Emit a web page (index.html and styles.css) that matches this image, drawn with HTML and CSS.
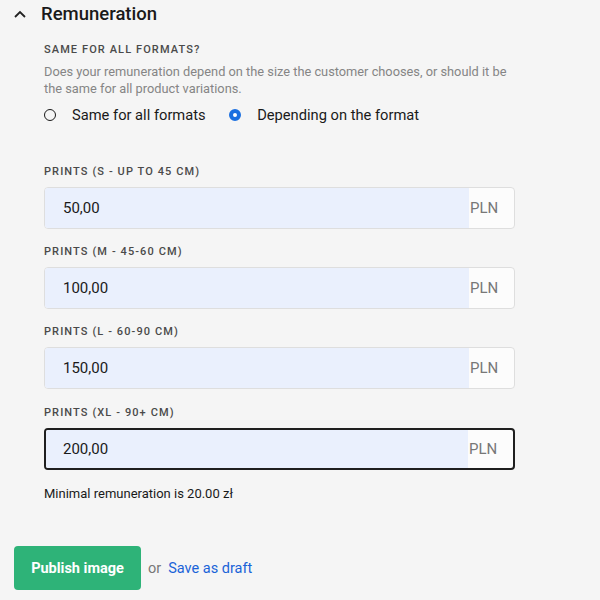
FILE: index.html
```html
<!DOCTYPE html>
<html>
<head>
<meta charset="utf-8">
<link rel="stylesheet" href="styles.css">
</head>
<body>
<div class="page">
  <div class="header">
    <svg class="chev" width="12" height="8" viewBox="0 0 12 8"><path d="M1 7 L6 2 L11 7" fill="none" stroke="#222" stroke-width="1.8"/></svg>
    <h2 class="title">Remuneration</h2>
  </div>
  <div class="content">
    <div class="caps">SAME FOR ALL FORMATS?</div>
    <p class="desc">Does your remuneration depend on the size the customer chooses, or should it be the same for all product variations.</p>
    <div class="radios">
      <label class="radio"><span class="dot"></span>Same for all formats</label>
      <label class="radio"><span class="dot on"></span>Depending on the format</label>
    </div>
    <div class="fields">
      <div class="field">
        <div class="caps">PRINTS (S - UP TO 45 CM)</div>
        <div class="input"><span class="val">50,00</span><span class="unit">PLN</span></div>
      </div>
      <div class="field">
        <div class="caps">PRINTS (M - 45-60 CM)</div>
        <div class="input"><span class="val">100,00</span><span class="unit">PLN</span></div>
      </div>
      <div class="field">
        <div class="caps">PRINTS (L - 60-90 CM)</div>
        <div class="input"><span class="val">150,00</span><span class="unit">PLN</span></div>
      </div>
      <div class="field">
        <div class="caps">PRINTS (XL - 90+ CM)</div>
        <div class="input focus"><span class="val">200,00</span><span class="unit">PLN</span></div>
      </div>
    </div>
    <div class="minimal">Minimal remuneration is 20.00 zł</div>
  </div>
  <div class="actions">
    <button class="publish">Publish image</button>
    <span class="or">or</span>
    <a class="draft">Save as draft</a>
  </div>
</div>
</body>
</html>
```
FILE: styles.css
```css
html, body { margin: 0; padding: 0; background: #f5f5f5; }
body { font-family: Roboto, "Noto Sans", sans-serif; color: #1f1f1f; width: 600px; height: 600px; overflow: hidden; }
.page { padding: 3px 0 0 14px; }
.header { display: flex; align-items: center; height: 22px; }
.chev { margin-right: 15px; margin-top: 0; }
.title { margin: 0; font-size: 18.5px; font-weight: 500; color: #1a1a1a; }
.content { padding-left: 30px; width: 471px; }
.caps { font-size: 11px; font-weight: 500; letter-spacing: 1.1px; color: #4a4a4a; line-height: 14px; }
.content > .caps { margin-top: 18px; }
.desc { margin: 6px 0 0; font-size: 12.8px; line-height: 17px; color: #858585; width: 480px; }
.radios { display: flex; gap: 23px; margin-top: 8px; height: 20px; align-items: center; }
.radio { display: flex; align-items: center; font-size: 14.7px; color: #1a1a1a; }
.dot { width: 10px; height: 10px; border: 1.5px solid #1a1a1a; border-radius: 50%; margin-right: 16px; box-sizing: content-box; }
.dot.on { border: 4px solid #1a6fe0; width: 4.5px; height: 4.5px; background: #fff; }
.fields { margin-top: 40px; display: flex; flex-direction: column; gap: 16px; }
.field { display: flex; flex-direction: column; gap: 8px; }
.field:last-child { margin-top: 1px; }
.input { height: 40px; border: 1px solid #dedede; border-radius: 4px; background: #fcfcfc; display: flex; align-items: center; overflow: hidden; }
.input.focus { border: 2px solid #1f1f1f; height: 38px; }
.val { flex: 1; align-self: stretch; display: flex; align-items: center; background: #eaf0fd; padding-left: 18px; font-size: 15px; color: #1a1a1a; }
.focus .val { padding-left: 17px; }
.unit { width: 44px; padding-left: 1px; font-size: 15px; color: #777; }
.minimal { margin-top: 16px; font-size: 13px; color: #1a1a1a; }
.actions { margin-top: 45px; display: flex; align-items: center; }
.publish { width: 127px; height: 44px; border: none; border-radius: 4px; background: #2eb378; color: #fff; font-family: Roboto, sans-serif; font-weight: 700; font-size: 14.5px; padding: 0; }
.or { margin-left: 7px; font-size: 14.5px; color: #777; }
.draft { margin-left: 7px; font-size: 14.5px; color: #1a63d8; }
```
